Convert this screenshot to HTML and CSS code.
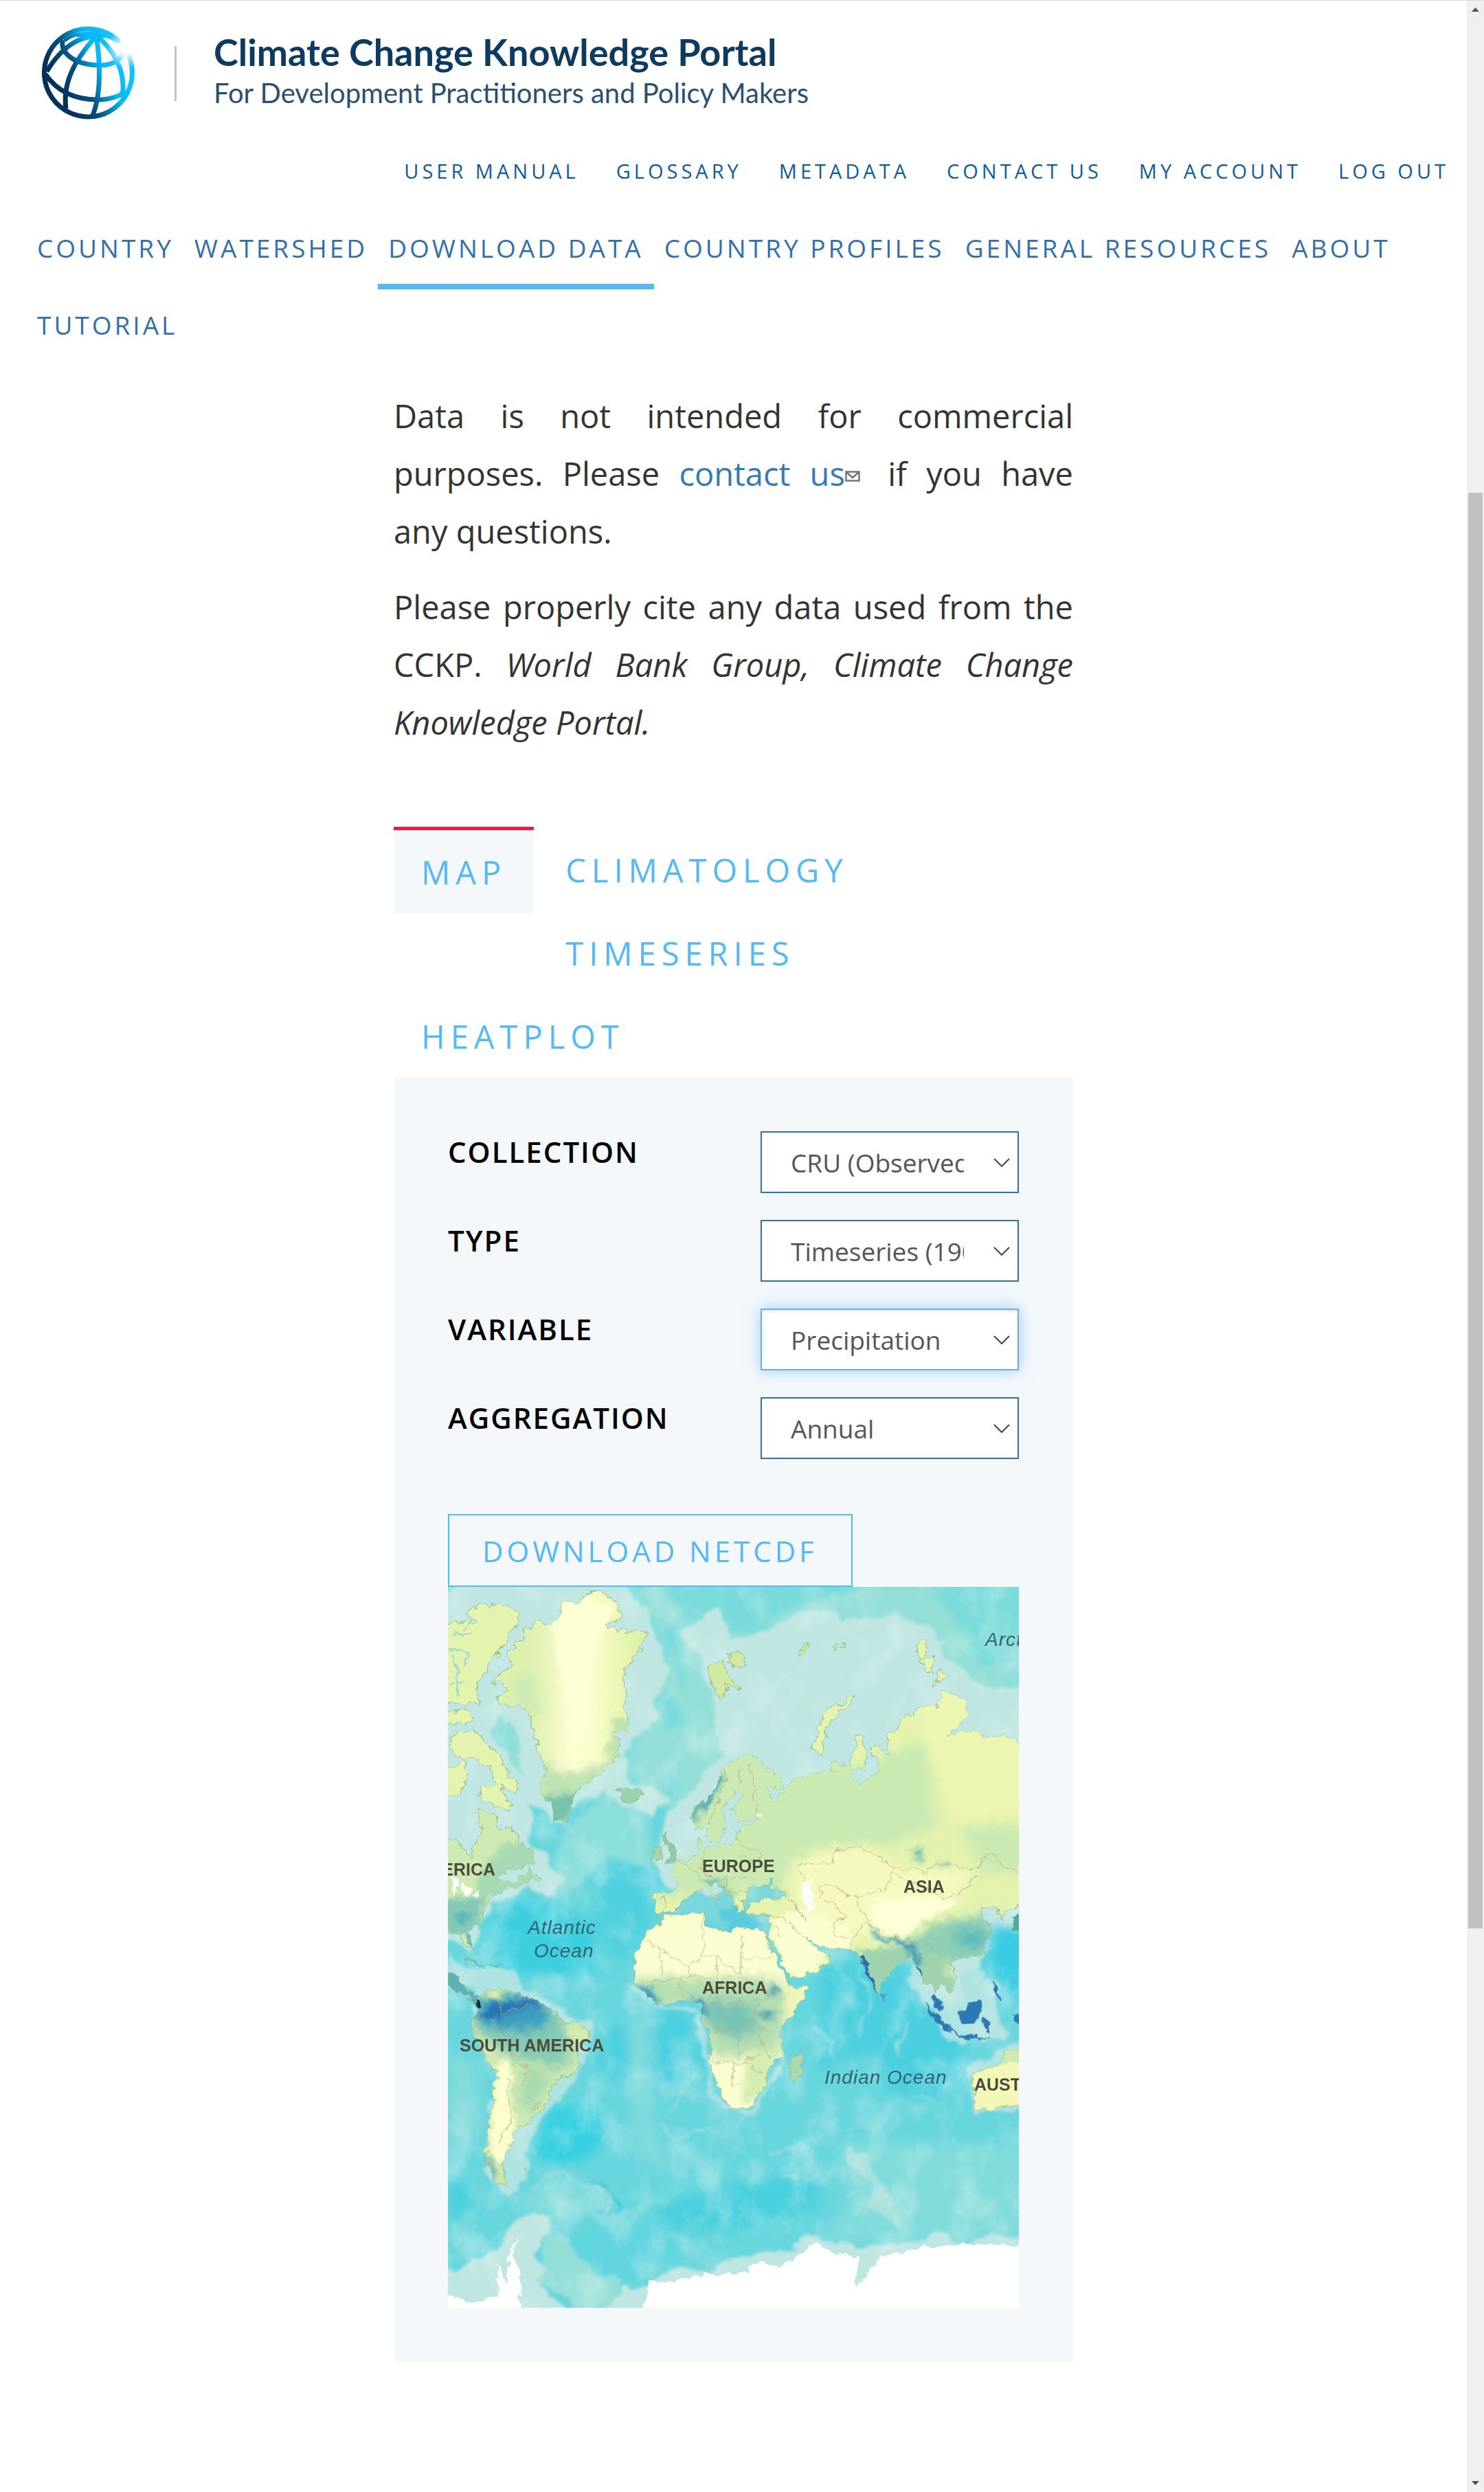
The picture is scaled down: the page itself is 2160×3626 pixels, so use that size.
FILE: index.html
```html
<!DOCTYPE html>
<html lang="en">
<head>
<meta charset="utf-8">
<meta name="viewport" content="width=device-width, initial-scale=1">
<title>Download Data | Climate Change Knowledge Portal</title>
<link rel="stylesheet" href="styles.css">
</head>
<body>
<div class="page">
  <header class="site-header">
    <a class="brand" href="#">
      <svg class="globe" viewBox="0 0 136 136" fill="none" stroke="url(#globeInk)" stroke-width="7" aria-hidden="true">
        <defs>
          <linearGradient id="globeInk" gradientUnits="userSpaceOnUse" x1="28" y1="92" x2="112" y2="48">
            <stop offset="0" stop-color="#03315c"/>
            <stop offset=".35" stop-color="#07507f"/>
            <stop offset=".72" stop-color="#06b6f5"/>
            <stop offset="1" stop-color="#10c0ff"/>
          </linearGradient>
          <radialGradient id="globeFade" gradientUnits="userSpaceOnUse" cx="124" cy="32" r="30">
            <stop offset=".25" stop-color="#fff" stop-opacity="1"/>
            <stop offset="1" stop-color="#fff" stop-opacity="0"/>
          </radialGradient>
        </defs>
        <path d="M126 40A64 64 0 1 1 114 23"/>
        <path d="M82 15C60 14 32 26 8 66M32 20C26 34 42 57 88 57C106 56 118 48 120 36"/>
        <path d="M6 70C24 96 50 107 82 107C100 107 116 102 122 94"/>
        <path d="M80 14C56 42 30 76 36 120M80 14C86 50 88 100 74 132M80 14C104 32 124 64 118 104"/>
        <path d="M34 21C50 8 84 4 114 24M50 13C66 14 74 14 80 18M80 18C92 12 100 14 112 22" stroke-width="5"/>
        <circle cx="80" cy="17" r="7" fill="#10b5f4" stroke="none"/>
        <circle cx="124" cy="32" r="30" fill="url(#globeFade)" stroke="none"/>
      </svg>
      <span class="brand-text">
        <span class="brand-name">Climate Change Knowledge Portal</span>
        <span class="brand-tag">For Development Practitioners and Policy Makers</span>
      </span>
    </a>
    <nav class="utility" aria-label="Account and help">
      <a href="#">User Manual</a>
      <a href="#">Glossary</a>
      <a href="#">Metadata</a>
      <a href="#">Contact Us</a>
      <a href="#">My Account</a>
      <a href="#">Log Out</a>
    </nav>
    <nav class="main-nav" aria-label="Main">
      <a href="#">Country</a>
      <a href="#">Watershed</a>
      <a href="#" class="current" aria-current="page">Download Data</a>
      <a href="#">Country Profiles</a>
      <a href="#">General Resources</a>
      <a href="#">About</a>
      <a href="#">Tutorial</a>
    </nav>
  </header>

  <main class="content">
    <p>Data is not intended for commercial purposes. Please <a href="#">contact us</a><svg class="mail" viewBox="0 0 22 16" aria-hidden="true"><path d="M1.500 1.500H20.500V14.500H1.500ZM2 2L11 10L20 2" fill="none" stroke="#757575" stroke-width="2.500"/></svg> if you have any&nbsp;questions.</p>
    <p>Please properly cite any data used from the CCKP. <em>World Bank Group, Climate Change Knowledge Portal.</em></p>

    <ul class="tabs">
      <li class="active"><a href="#map">Map</a></li>
      <li><a href="#climatology">Climatology</a></li>
      <li><a href="#timeseries">Timeseries</a></li>
      <li><a href="#heatplot">Heatplot</a></li>
    </ul>

    <section class="panel" id="map">
      <form class="filters">
        <label for="collection">Collection</label>
        <select id="collection"><option>CRU (Observed)</option></select>
        <label for="type">Type</label>
        <select id="type"><option>Timeseries (1901-2019)</option></select>
        <label for="variable">Variable</label>
        <select id="variable" class="focused"><option>Precipitation</option></select>
        <label for="aggregation">Aggregation</label>
        <select id="aggregation"><option>Annual</option></select>
      </form>
      <button type="button" class="download">Download NetCDF</button>
      <svg class="map" viewBox="0 0 831 1049" role="img" aria-label="World precipitation map">
        <defs>
          <filter id="soft" x="-60%" y="-60%" width="220%" height="220%"><feGaussianBlur stdDeviation="9"/></filter>
          <filter id="softer" x="-60%" y="-60%" width="220%" height="220%"><feGaussianBlur stdDeviation="18"/></filter>
          <filter id="shelf" x="-5%" y="-5%" width="110%" height="110%">
            <feTurbulence type="fractalNoise" baseFrequency=".022" numOctaves="4" seed="8" result="n"/>
            <feDisplacementMap in="SourceGraphic" in2="n" scale="38" xChannelSelector="R" yChannelSelector="G"/>
            <feGaussianBlur stdDeviation="2"/>
          </filter>
          <filter id="coast" x="-5%" y="-5%" width="110%" height="110%">
            <feTurbulence type="fractalNoise" baseFrequency=".07" numOctaves="3" seed="4" result="n"/>
            <feDisplacementMap in="SourceGraphic" in2="n" scale="16" xChannelSelector="R" yChannelSelector="G"/>
          </filter>
          <filter id="relief" x="0" y="0" width="100%" height="100%">
            <feTurbulence type="fractalNoise" baseFrequency=".022 .016" numOctaves="5" seed="11"/>
            <feColorMatrix values="0 0 0 0 .75  0 0 0 0 .9  0 0 0 0 .88  2.600 0 0 0 -1.150"/>
          </filter>
          <linearGradient id="ice"><stop offset="0" stop-color="#dff1ae"/><stop offset=".25" stop-color="#dcf0b0"/><stop offset=".52" stop-color="#fdfed0"/><stop offset=".62" stop-color="#fdfed0"/><stop offset=".85" stop-color="#e8f5b0"/><stop offset="1" stop-color="#d8eea8"/></linearGradient>
          <clipPath id="eurasia"><use href="#eurasiaShape"/></clipPath>
          <clipPath id="africa"><use href="#africaShape"/></clipPath>
          <clipPath id="samerica"><use href="#samericaShape"/></clipPath>
          <clipPath id="greenland"><use href="#greenlandShape"/></clipPath>
          <clipPath id="namerica"><use href="#namericaShape"/></clipPath>
        </defs>
        <rect width="831" height="1049" fill="#67d6dd"/>

        <!-- northern sea floor -->
        <g transform="scale(.5485 .357) translate(-22 -25)">
          <g filter="url(#soft)">
            <path d="M-20 -20H1580V900H-20Z" fill="#7adcda"/>
            <path d="M850 215L900 140L1030 60L1200 25H1300L1380 190L1430 350L1537 330V900H700L600 930L520 830L520 660L600 500V300L540 25H600L640 200Z" fill="#93dfd8"/>
            <path d="M750 -20H1030L850 180L760 200ZM590 480L630 480L650 580L600 610ZM600 740L640 850L620 900L585 850ZM570 120L630 200L660 360L640 460L610 300Z" fill="#78dadb"/>
            <path d="M340 1000L450 860L520 930L560 1050V1180L440 1120L330 1300L300 1150Z" fill="#8adedb"/>
          </g>
          <g filter="url(#softer)">
            <path d="M120 1370L200 1290L300 1310L400 1400L430 1600H120Z" fill="#3acfe0"/>
            <path d="M450 1150L550 1170L610 1240L560 1280L560 1400L480 1560L400 1400Z" fill="#4dd0df"/>
          </g>
        </g>
        <g filter="url(#shelf)">
          <g transform="scale(.5485 .357) translate(-22 -25)">
            <g fill="#bfe6e2">
              <path d="M-30 90L100 -20H480L530 100L560 200L600 290V420L560 540L510 640L490 790L600 900L560 960L500 900L440 850L360 900L340 1000L290 970L240 890L220 960L240 1060L280 1120L335 1200L300 1280L230 1270L150 1310L110 1400L90 1500L-30 1450Z"/>
              <path d="M650 190L745 115L760 230L850 215L900 165L1030 105L1060 150L1200 150L1300 200L1340 290L1400 400L1470 465L1600 410V900H900L850 1240L700 1260L620 1250L550 1160L590 1020L620 930L700 810L750 710L735 500L690 330Z"/>
              <path d="M1430 1320L1490 1300L1600 1250V1420L1480 1520L1440 1560L1370 1600L1380 1700L1270 1700L1200 1560L1300 1500L1440 1480Z"/>
            </g>
            <path d="M140 570L190 580L220 660L215 780L180 700L140 620Z" fill="#8fdfd9"/>
            <path d="M600 1370L640 1270L760 1240L830 1230H900L930 1290L880 1370V1440L780 1440L710 1400L690 1350Z" fill="#79d6da"/>
            <path d="M740 1360L800 1350L860 1400L830 1440L760 1430Z" fill="#58ccdb"/>
          </g>
        </g>

        <!-- southern sea floor -->
        <g transform="translate(0 511) scale(.5485 .408) translate(-22 0)">
          <g filter="url(#softer)">
            <path d="M240 740L300 600L420 590L440 720L380 800L280 800Z" fill="#35d0e1"/>
            <path d="M1010 100L1260 80L1400 380L1400 560L1200 560L1140 400L1000 480ZM600 240L690 300L700 450L560 550L420 500L440 330Z" fill="#4acfdf"/>
            <path d="M560 960L850 850L1000 860L1010 960L800 1040L640 1060ZM22 850L100 900L60 1000L22 1000Z" fill="#48d0de"/>
            <path d="M1460 -40H1600V330L1460 140Z" fill="#37cbe2"/>
            <path d="M1060 720L1600 740V1080L1000 1090L1080 950ZM200 920L330 850L460 900L440 980L250 1000Z" fill="#7fdcdb"/>
            <path d="M500 280L560 280L560 640L620 860L520 760ZM22 400L100 450L110 700L22 800Z" fill="#82dbdb"/>
          </g>
        </g>
        <g filter="url(#shelf)">
          <g transform="translate(0 511) scale(.5485 .408) translate(-22 0)">
            <path d="M110 110L200 110L240 190L330 260L405 320L400 380L380 480L320 560L260 670L230 760L255 810L220 870L170 900L120 830L125 700L155 480L115 430L80 300L100 200L22 160V60L60 100Z" fill="#bfe6e2" opacity=".8"/>
            <path d="M1260 60L1380 60L1480 200L1500 350L1400 370L1340 330L1270 230ZM1600 350L1470 400L1400 480L1420 630L1600 620Z" fill="#bfe6e2" opacity=".8"/>
            <path d="M970 180L910 240L900 430L870 550L830 610L770 625L735 560L710 440L680 250L590 250L510 170" fill="none" stroke="#a7e0e0" stroke-width="14" stroke-linejoin="round"/>
            <path d="M410 870Q470 890 470 940T420 975" fill="none" stroke="#2fbdd5" stroke-width="8"/>
            <path d="M240 880Q300 840 370 870T450 900T440 980M1000 320Q1060 350 1040 450M1130 100L1135 260L1120 360M1240 290L1230 440M580 670L640 710L700 680M880 750L990 750M910 850L960 860L1000 840M1250 580L1320 590M670 480L610 620M1080 910H1120" fill="none" stroke="#b5e4e1" stroke-width="7" opacity=".7"/>
            <path d="M1080 760L1120 755L1160 840L1200 930L1205 1030L1140 970L1150 890L1090 800Z" fill="#a9e1dd"/>
            <path d="M-30 1180L130 1140L200 1020L290 980L280 1060L250 1130L290 1240L370 1400H-30ZM380 1400L480 1280L560 1200L700 1180L860 1130L990 1070L1110 1100L1250 1090L1310 1050L1390 1080L1600 1060V1400Z" fill="#bfe6e2"/>
            <path d="M330 1060L440 1000L640 1060L720 1100L560 1160L500 1260L400 1200Z" fill="#60d5de"/>
            <path d="M280 1060L330 1060L400 1190L500 1240L440 1340H370L270 1200Z" fill="#93dfd8"/>
          </g>
        </g>
        <rect width="831" height="1049" filter="url(#relief)" opacity=".4"/>

        <!-- northern land -->
        <g filter="url(#coast)">
          <g transform="scale(.5485 .357) translate(-22 -25)" fill="#e4f3ae" stroke="#8fb98c" stroke-width="2">
            <path id="greenlandShape" d="M370 75L400 52H430L455 75L485 125L475 160L440 175L465 205L490 185V220L525 198L550 215L545 245L520 300L490 370V430L500 465L488 500L498 530L495 600L460 620L480 650V710L450 760L410 800L355 870L345 960L335 985L305 970L290 905L270 850L275 790L290 770L270 740L262 680L250 620L235 540L210 510L160 505L150 470L180 445L140 410L185 360L190 330L178 290L220 240V200L265 160L300 190L325 145V95L355 85Z" fill="url(#ice)"/>
            <g clip-path="url(#greenland)" stroke="none">
              <path d="M290 100H470L410 260L390 500L355 740L335 500L310 260Z" fill="#ffffd6" filter="url(#soft)"/>
              <path d="M240 700L330 790L400 760L500 700L340 1000H280Z" fill="#bfe3b3" filter="url(#softer)"/>
              <path d="M270 880L380 860L330 1000L290 980Z" fill="#78c1ad" filter="url(#soft)"/>
              <path d="M460 560L520 560L480 760L440 720Z" fill="#bfe3b0" filter="url(#soft)"/>
              <path d="M190 380L250 400L270 560L200 520Z" fill="#cdebb2" filter="url(#softer)"/>
            </g>
            <path d="M75 160V115L110 98L170 95L200 120L215 160L180 240L150 310L125 360L100 420V500H0V180Z"/>
            <path d="M30 220L90 215M22 280L80 300L60 360M40 300L50 470M70 130L90 170L60 200M30 420L70 400" fill="none" stroke="#a6dccb" stroke-width="7"/>
            <path d="M22 535L80 530L92 570L70 580H0V535Z"/>
            <path d="M30 640L55 610L100 620L115 660L150 690L170 740L185 800L212 830L200 870L165 835L190 940L150 920L105 880L110 850L150 830L130 760L90 720L50 730L30 690Z"/>
            <path d="M0 760L70 740L75 800L50 870L0 880Z"/>
            <path id="namericaShape" d="M105 935L140 945L160 1010L190 990L215 1070L250 1110V1160L180 1180L150 1220L205 1230L240 1180L270 1215L200 1245L150 1270L120 1330L110 1390L75 1440L85 1500L70 1490L55 1440H0V1040L50 1060L85 1140L95 1080L108 1020Z" fill="#cdeab2"/>
            <g clip-path="url(#namerica)" stroke="none">
              <path d="M180 1060L260 1080V1240L100 1300L100 1200Z" fill="#a5dab3" filter="url(#soft)"/>
              <path d="M0 1300L120 1290L100 1440H0Z" fill="#84c9b5" filter="url(#soft)"/>
              <path d="M40 1360L80 1360L60 1410Z" fill="#4fb3bd" filter="url(#soft)"/>
            </g>
            <path d="M30 1205L52 1215L40 1290L36 1240ZM60 1230L85 1260L70 1290L58 1270ZM85 1275L110 1268L95 1285Z" fill="#fff" stroke="#fff"/>
            <path d="M470 855L500 845L525 842L540 870L520 900L495 912L480 880Z" fill="#9ad3ab"/>
            <path d="M708 340L745 320L760 360L795 445L765 420L745 490L725 430ZM760 310L790 290L815 310L812 345L785 360Z" fill="#d2e9a2"/>
            <path d="M950 300L965 265L982 262L975 290L958 310ZM1040 270L1060 260L1050 290ZM1065 250L1075 255L1065 273Z" fill="#c9e49b"/>
            <path d="M1092 478L1100 490L1050 545L1030 600L1015 680V712L985 685L1005 610L1025 530L1060 510Z"/>
            <path d="M1268 260L1280 245L1295 290L1285 310L1265 300ZM1275 315H1310L1308 385L1285 350ZM1325 360L1347 395L1312 425Z"/>
            <path id="eurasiaShape" d="M820 708L770 745L740 790L725 870L680 920L668 960L680 1020L705 1010L720 1070L740 1065L755 1010L750 930L790 850L800 870L780 930L790 985L840 970L850 980L800 1000L785 1060L740 1090L700 1090L690 1040V1100L640 1150L615 1180L630 1210L625 1265L570 1280L575 1355L620 1355L650 1290L690 1260L705 1255L750 1320L715 1255L735 1230L780 1300L790 1355L805 1340L800 1305L820 1295L825 1230L850 1245L890 1215L870 1245L920 1290L850 1300L820 1320V1360H880L870 1420L880 1470L935 1625L1000 1590L1038 1535L1000 1500L970 1450L1010 1490L1090 1500L1120 1540L1140 1620L1165 1690L1190 1600L1250 1535L1275 1605L1300 1640L1320 1680L1325 1640L1355 1675L1370 1605L1350 1550L1440 1525L1460 1420L1440 1340L1475 1330L1490 1380L1500 1350L1560 1290V700L1510 630L1470 640L1400 610L1350 630L1405 550L1390 490L1340 445L1320 510H1280L1225 570L1220 610L1185 620L1195 720L1160 670L1140 690L1165 760L1150 800L1110 835L1090 750L1110 630L1125 650L1130 780L1045 740L1040 780L980 785L940 810L905 870L885 900L870 850L910 840L900 800L840 725Z"/>
            <g clip-path="url(#eurasia)" stroke="none">
              <path d="M660 700H920L1100 760L1300 640L1320 1000L1200 1080L1000 1080L900 1250L560 1300V1000Z" fill="#caeab2" filter="url(#softer)"/>
              <path d="M1250 440L1570 440V900L1400 1000L1340 900L1300 700Z" fill="#ecf6b0" filter="url(#softer)"/>
              <path d="M940 1140L1120 1080L1180 1140L1220 1180L1420 1180L1380 1280L1200 1460L1000 1440L940 1300Z" fill="#f6f9bf" filter="url(#softer)"/>
              <path d="M1140 1310L1250 1280L1380 1310L1300 1370L1240 1450L1160 1420Z" fill="#ffffd8" filter="url(#soft)"/>
              <path d="M870 1380L960 1340L1080 1420L1100 1500L1040 1500L960 1640L900 1560Z" fill="#fdfed0" filter="url(#soft)"/>
              <path d="M1330 1390L1470 1350V1540L1360 1560L1240 1540L1250 1460Z" fill="#8fcfb6" filter="url(#softer)"/>
              <path d="M1380 1000H1570V1180L1440 1200Z" fill="#cbeab2" filter="url(#softer)"/>
              <path d="M1370 1430L1450 1420L1440 1500L1380 1490Z" fill="#5bb9bc" filter="url(#softer)"/>
              <path d="M1110 1500L1250 1490L1340 1540L1380 1700H1130Z" fill="#9fd3ae" filter="url(#soft)"/>
              <path d="M1140 1410L1180 1455L1250 1470L1280 1560L1260 1560L1240 1490L1160 1460Z" fill="#2c8fbd" filter="url(#soft)"/>
              <path d="M1112 1520L1125 1530L1165 1690L1150 1680ZM1262 1560L1275 1580L1305 1680L1290 1660Z" fill="#256bb0"/>
              <path d="M670 1020L668 950L700 890L735 780L750 790L730 880L685 950Z" fill="#3f9fb8" filter="url(#soft)"/>
              <path d="M690 1210L740 1215L790 1300L770 1310Z" fill="#7fc6b3" filter="url(#soft)"/>
              <path d="M1255 1090L1285 1090L1280 1150L1255 1130ZM1330 1140L1350 1140L1345 1180ZM880 1230L930 1290L900 1280Z" fill="#72bfb7" filter="url(#soft)"/>
            </g>
            <path d="M600 1020L615 1080L635 1120L630 1150L600 1160L610 1110L595 1060Z" fill="#8fcbab"/>
            <path d="M570 1090H590L585 1135L563 1140Z" fill="#a5d5a8"/>
            <path d="M1520 1380L1560 1350V1410L1527 1430Z" fill="#4fa9a0"/>
            <path d="M975 1222L990 1215L985 1260L1000 1340L975 1350L962 1255Z" fill="#fbfbf8" stroke="#fff"/>
            <path d="M845 950L852 970" stroke="#fff" stroke-width="5"/>
            <g fill="none" stroke="#b9b18a" stroke-width="2">
              <path d="M790 760L800 850M825 740L845 960M760 780L740 900L715 1000M785 1060L850 1110L840 1150L790 1120M700 1100L690 1170L740 1220L820 1210M640 1150L690 1200M575 1300L600 1290L590 1350M760 1220L770 1270L820 1260M950 1160L1040 1150L1060 1100L1110 1080L1160 1120L1210 1170L1290 1180L1330 1150L1430 1180L1440 1130L1470 1110L1500 1170L1537 1190M950 1180L970 1220M1210 1170L1190 1250L1110 1290L1110 1330L1140 1400M1210 1200L1340 1290L1380 1280L1430 1200M1010 1290L1010 1245L1060 1250L1080 1290L1110 1290M1020 1290L1080 1370L1050 1390V1450L1080 1450M930 1300L970 1380M880 1360H910L940 1420L970 1450M1090 1490L1120 1400L1150 1380M1140 1400L1200 1460L1300 1480L1330 1540M910 1440L880 1400"/>
            </g>
          </g>

          <!-- southern land -->
          <g transform="translate(0 511) scale(.5485 .408) translate(-22 0)" stroke="#8fb98c" stroke-width="2">
            <path id="africaShape" d="M600 -75L700 -90L710 -50L765 -20L790 -40L865 -20L875 30L920 140L930 175H980L965 230L905 320L908 420L870 470L865 530L830 600L770 612L745 560L715 440L725 370L690 270L695 240L660 225L580 238L520 170L515 110L530 20L570 -45Z" fill="#fdfed0"/>
            <g clip-path="url(#africa)" stroke="none">
              <path d="M500 140L880 140L940 200L920 330L900 410L720 430L680 240L580 250Z" fill="#b5deb1" filter="url(#softer)"/>
              <path d="M690 220L830 230L850 330L780 360L710 310Z" fill="#78c3b5" filter="url(#softer)"/>
              <path d="M515 165L560 180L590 240L560 230ZM660 220L700 220L710 280L690 270ZM845 265L890 265L870 295ZM870 180L900 180L895 215Z" fill="#3a94b8" filter="url(#soft)"/>
              <path d="M820 400L900 400L860 560L800 590Z" fill="#d4edb0" filter="url(#soft)"/>
              <path d="M925 170L980 175L910 310Z" fill="#eef6b6" filter="url(#soft)"/>
            </g>
            <path d="M930 430L968 398L972 430L945 518L928 490Z" fill="#a9d9ac"/>
            <path d="M0 120L50 140L75 195L105 210L100 240L60 200L0 150Z" fill="#5fb0b0"/>
            <path d="M60 68L100 85L120 98M135 100H160M75 -10L82 30" fill="none" stroke="#6fbfaa" stroke-width="8"/>
            <path id="samericaShape" d="M100 215L130 180L180 185L235 210L290 250L330 295L385 320L400 350L370 400L365 470L305 520L285 590L245 630L240 655L195 690L180 750L165 800L180 885L150 870L122 800L130 650L155 480L115 420L82 300L100 270Z" fill="#cfeab0"/>
            <g clip-path="url(#samerica)" stroke="none">
              <path d="M90 200L240 190L330 290L350 380L330 470L230 440L180 420L100 330Z" fill="#84cab5" filter="url(#softer)"/>
              <path d="M95 230L240 205L300 270L270 320L180 330L110 310Z" fill="#3b9cc1" filter="url(#softer)"/>
              <path d="M98 290L140 240L230 215L280 250L220 245L140 290Z" fill="#2c74b2" filter="url(#soft)"/>
              <path d="M150 440L190 430L195 540L200 660L180 780L150 800L130 780Z" fill="#ffffd0" filter="url(#soft)"/>
              <path d="M330 310L400 330L370 380Z" fill="#d3ecae" filter="url(#soft)"/>
              <path d="M120 770L130 780L155 870L130 840Z" fill="#5fa9b3" filter="url(#soft)"/>
              <path d="M135 175L165 185L150 220L130 215Z" fill="#e9efaa" filter="url(#soft)"/>
              <path d="M230 440L300 500L240 620L200 600Z" fill="#a6d9b0" filter="url(#softer)"/>
            </g>
            <path d="M100 220L110 225L112 240L104 242Z" fill="#06233e" stroke="none"/>
            <g fill="#2b79b4" stroke="#3f7fb4">
              <path d="M1283 230L1330 280L1358 338L1335 325ZM1350 338L1400 350L1458 355L1400 362ZM1375 265L1430 222L1440 250L1420 310L1385 300ZM1445 290L1462 300L1458 330L1446 320ZM1312 200L1335 240L1325 262L1308 220ZM1470 150L1485 190L1487 215L1472 195ZM1525 270L1560 290V310L1530 300Z"/>
              <path d="M1175 205L1184 212L1178 224Z" fill="#5aa9ac"/>
            </g>
            <path d="M1560 385L1500 410L1475 450L1410 490L1425 620L1480 605L1560 590Z" fill="#f3f8b9"/>
            <path d="M1560 385L1500 410L1475 450L1560 440Z" fill="#cfe9b0" stroke="none"/>
            <path d="M225 830L235 828L230 838Z" fill="#a5dba0"/>
            <g fill="none" stroke="#b9b18a" stroke-width="2">
              <path d="M580 30L590 130M550 20L580 30L660 105L700 60L740 75L800 130V0M700 -80V60M800 70H880M740 75L735 140L640 130M660 105L655 140M550 150L600 160L640 130L640 220M750 160L700 240L760 230L850 220L900 200M850 220L830 300L870 340M750 240L740 320L790 350V420M720 440L810 445L850 410M780 445L775 530L800 520M810 445L850 480M840 340L880 430M740 320L725 340M200 440L240 470L210 520M235 560L265 590L245 610M180 500L190 640L160 740M150 200L165 270L230 240M130 290L190 380L200 430"/>
            </g>
          </g>
        </g>

        <!-- Antarctica -->
        <g filter="url(#coast)">
          <g transform="translate(0 511) scale(.5485 .408) translate(-22 0)" fill="#fff">
            <path d="M530 1360L560 1220L620 1230L700 1200H790L860 1150L900 1180L1000 1085L1030 1120L1110 1135L1100 1250L1170 1140L1280 1105L1400 1090L1580 1100V1360ZM-10 1270L90 1300L160 1270L150 1160L175 1240L185 1120L225 1040L190 1120L215 1200V1360H-10Z"/>
          </g>
        </g>

        <g class="map-land">
          <text x="69" y="420" text-anchor="end">NORTH AMERICA</text>
          <text x="370" y="415">EUROPE</text>
          <text x="663" y="445">ASIA</text>
          <text x="370" y="592">AFRICA</text>
          <text x="17" y="676">SOUTH AMERICA</text>
          <text x="766" y="733">AUSTRALIA</text>
        </g>
        <g class="map-sea">
          <text x="782" y="86">Arctic Ocean</text>
          <text x="116" y="505">Atlantic</text>
          <text x="125" y="539">Ocean</text>
          <text x="548" y="723">Indian Ocean</text>
        </g>
      </svg>
    </section>
  </main>
</div>
<div class="scrollbar" aria-hidden="true">
  <svg viewBox="0 0 11 6"><path d="M0 6L5.500 0L11 6Z" fill="#505050"/></svg>
  <div class="track"><div class="thumb"></div></div>
  <svg viewBox="0 0 11 6"><path d="M0 0L5.500 6L11 0Z" fill="#505050"/></svg>
</div>
</body>
</html>
```
FILE: styles.css
```css
* { box-sizing: border-box; }

body {
  margin: 0;
  display: grid;
  grid-template-columns: minmax(0, 1fr) 25px;
  border-top: 1px solid #d9d9d9;
  background: #fff;
  color: #333;
  font-family: "Open Sans", "Noto Sans", sans-serif;
  font-size: 47px;
}

a { color: #337ab7; text-decoration: none; }

/* header */
.brand {
  display: flex;
  align-items: center;
  padding: 37px 60px 0;
  color: #0d3a61;
}
.globe { width: 136px; height: 136px; flex: none; }
.brand-text {
  position: relative;
  display: flex;
  flex-direction: column;
  margin-left: 58px;
  padding: 0 0 6px 57px;
  font-family: Lato, "Open Sans", sans-serif;
}
.brand-text::before {
  content: "";
  position: absolute;
  left: 0;
  top: 23px;
  width: 3px;
  height: 80px;
  background: #c3c3c3;
}
.brand-name { font-size: 54px; line-height: 64px; font-weight: 700; }
.brand-tag { font-size: 40px; line-height: 54px; color: #2b4f72; }

.utility {
  display: flex;
  flex-wrap: wrap;
  justify-content: flex-end;
  gap: 54px;
  padding: 49px 26px 0;
  font-size: 29px;
  line-height: 52px;
  letter-spacing: 5px;
  text-transform: uppercase;
}
.utility a { color: #105c99; }

.main-nav {
  display: flex;
  flex-wrap: wrap;
  padding: 34px 39px 0;
  font-size: 37px;
  line-height: 104px;
  letter-spacing: 4px;
  text-transform: uppercase;
}
.main-nav a {
  padding: 0 15px;
  border-bottom: 8px solid transparent;
  color: #336fad;
}
.main-nav .current { border-bottom-color: #55b9f3; }

/* content column */
.content {
  max-width: 989px;
  margin: 30px auto 188px;
}
.content p {
  margin: 0 0 26px;
  line-height: 84px;
  text-align: justify;
}
.mail { width: 22px; height: 16px; margin: 0 12px 6px 0; }

/* tabs */
.tabs {
  display: flow-root;
  margin: 110px 0 0;
  padding: 0 0 2px;
  list-style: none;
  letter-spacing: 8px;
  text-transform: uppercase;
}
.tabs li { float: left; margin-right: 6px; }
.tabs a {
  display: block;
  padding: 5px 40px 0;
  line-height: 116px;
  color: #55b9f3;
}
.tabs .active a {
  padding-top: 0;
  border-top: 5px solid #f01e3e;
  background: #f4f8fb;
  line-height: 122px;
}

/* map panel */
.panel {
  padding: 78px 79px 79px;
  background: #f4f8fb;
}
.filters {
  display: grid;
  grid-template-columns: 1fr 376px;
  row-gap: 39px;
}
.filters label {
  color: #000;
  font-size: 42px;
  line-height: 60px;
  font-weight: 600;
  letter-spacing: 2px;
  text-transform: uppercase;
}
.filters select {
  appearance: none;
  width: 100%;
  height: 90px;
  padding: 0 78px 0 42px;
  border: 2px solid #336fad;
  border-radius: 0;
  background: #fff url("data:image/svg+xml,%3Csvg xmlns='http://www.w3.org/2000/svg' viewBox='0 0 24 13'%3E%3Cpath d='M1 1L12 12L23 1' fill='none' stroke='%23444' stroke-width='2'/%3E%3C/svg%3E") no-repeat right 11px center / 24px 13px;
  color: #555;
  font: 37px "Open Sans", "Noto Sans", sans-serif;
}
.filters .focused {
  border-color: #66afe9;
  box-shadow: inset 0 3px 3px rgba(0, 0, 0, .08), 0 0 21px rgba(102, 175, 233, .6);
}
.download {
  display: block;
  height: 106px;
  margin-top: 80px;
  padding: 0 49px 0 48px;
  border: 2px solid #55b9f3;
  background: transparent;
  color: #55b9f3;
  font: 42px "Open Sans", "Noto Sans", sans-serif;
  letter-spacing: 5px;
  text-transform: uppercase;
}
.map { display: block; width: 100%; height: auto; overflow: hidden; }
.map-land {
  fill: #4a4d3c;
  font: 700 25px "Liberation Sans", Arial, sans-serif;
}
.map-sea {
  fill: #35606e;
  font: italic 28px "Liberation Sans", Arial, sans-serif;
  letter-spacing: 1px;
}

/* window scrollbar */
.scrollbar {
  position: sticky;
  top: 0;
  display: flex;
  flex-direction: column;
  align-items: center;
  height: calc(100vh - 1px);
  padding: 10px 0;
  background: #f0f0f0;
}
.scrollbar svg { width: 11px; height: 6px; }
.track {
  flex: 1;
  display: grid;
  grid-template-rows: 700fr 2089fr 804fr;
  width: 21px;
}
.thumb { grid-row: 2; background: #c1c1c1; }
```
